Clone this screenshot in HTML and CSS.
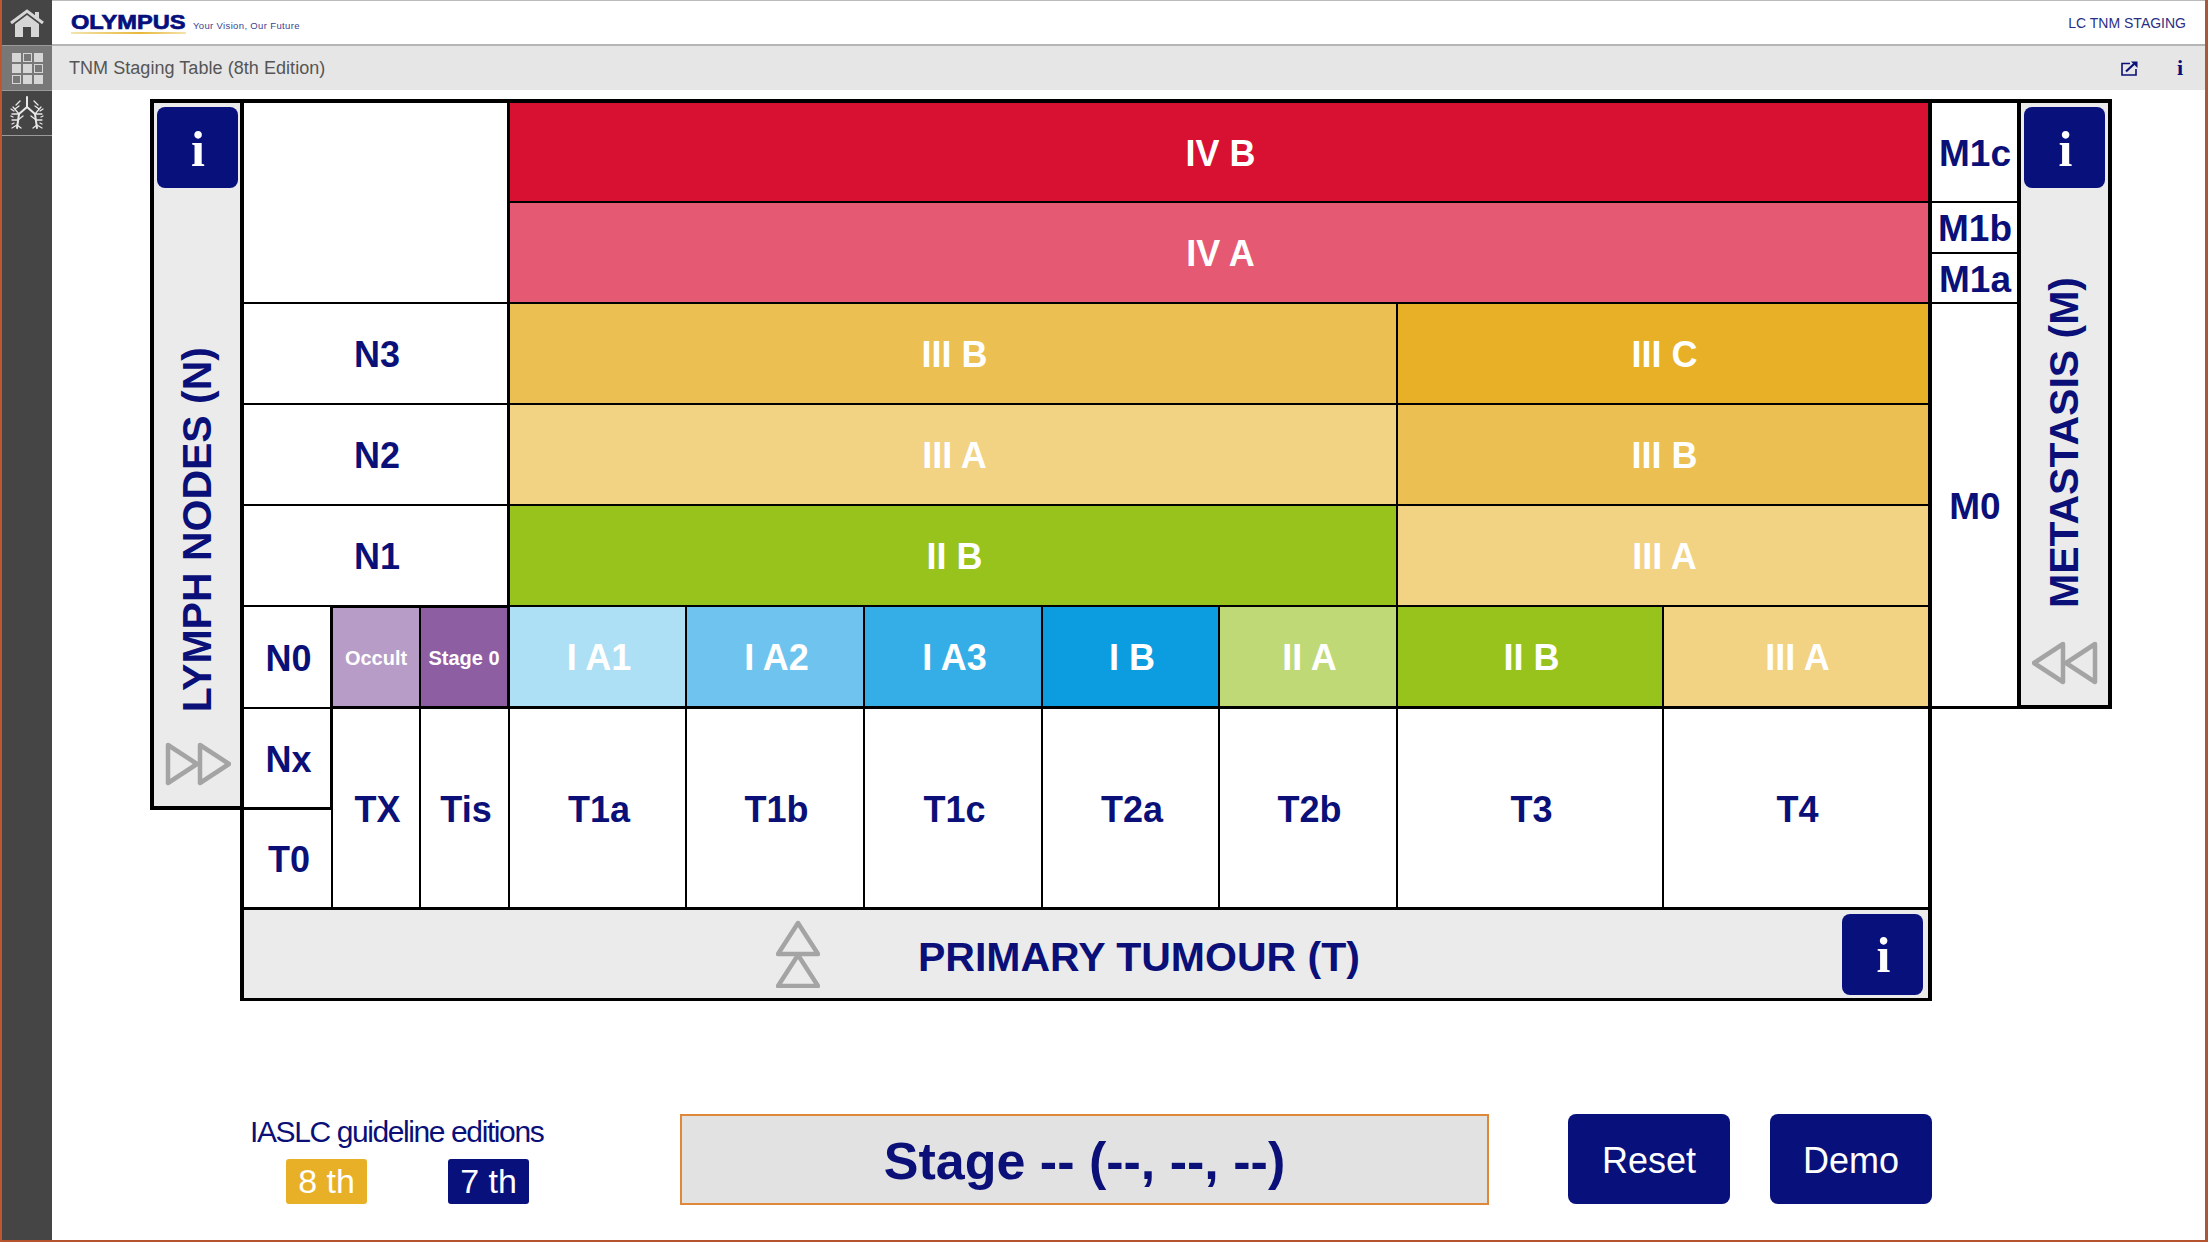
FILE: index.html
```html
<!DOCTYPE html>
<html lang="en">

    <head>
        <meta charset="UTF-8">
        <meta name="viewport" content="width=device-width, initial-scale=1.0">
        <title>TNM Staging Table</title>
        <link rel="stylesheet" href="styles.css">
    </head>

    <body>
        <div class="app">
            <nav class="side">
                <a class="side_item" href="#home">
                    <svg width="34" height="28" viewBox="0 0 34 28">
                        <path d="M1 14 L17 2 L33 14" fill="none" stroke="#d6d6d6" stroke-width="3"/>
                        <path d="M25 3 h4 v7 l-4 -3 z" fill="#d6d6d6"/>
                        <path d="M5 15 L17 6 L29 15 V28 H21 V18 H13 V28 H5 Z" fill="#d6d6d6"/>
                    </svg>
                </a>
                <a class="side_item side_item-active" href="#table">
                    <div class="tiles">
                        <span class="tile"></span><span class="tile tile-open"></span><span class="tile"></span>
                        <span class="tile"></span><span class="tile"></span><span class="tile tile-open"></span>
                        <span class="tile tile-open"></span><span class="tile"></span><span class="tile"></span>
                    </div>
                </a>
                <a class="side_item side_item-last" href="#lungs">
                    <svg width="34" height="34" viewBox="0 0 34 34" fill="none" stroke="#e8e8e8" stroke-linecap="round">
                        <path d="M17 1 V11 L9 18 L7 32 M17 11 L25 18 L27 32" stroke-width="2"/>
                        <path d="M9 18 L3 11 M9 18 L2 18 M8 24 L2 24 M8 24 L13 20 M7 29 L2 32 M7 29 L11 32 M6 9 L10 5 M5 13 L9 10 M4 15 L1 13 M3 21 L1 20 M4 27 L2 28 M25 18 L31 11 M25 18 L32 18 M26 24 L32 24 M26 24 L21 20 M27 29 L32 32 M27 29 L23 32 M28 9 L24 5 M29 13 L25 10 M30 15 L33 13 M31 21 L33 20 M30 27 L32 28" stroke-width="1.3"/>
                    </svg>
                </a>
            </nav>

            <main class="main">
                <header class="top">
                    <div class="brand">
                        <span class="brand_name">OLYMPUS</span>
                        <span class="brand_line"></span>
                    </div>
                    <span class="brand_tag">Your Vision, Our Future</span>
                    <span class="top_title">LC TNM STAGING</span>
                </header>

                <div class="bar">
                    <span class="bar_title">TNM Staging Table (8th Edition)</span>
                    <svg class="bar_edit" width="17" height="15" viewBox="0 0 17 15" fill="none" stroke="#0a1078">
                        <path d="M9 2.5 H1 V14 H15 V8" stroke-width="1.6"/>
                        <path d="M5 10.5 L13 3" stroke-width="2.2"/>
                        <path d="M10 0.5 H16.5 V7 Z" fill="#0a1078" stroke="none"/>
                    </svg>
                    <span class="bar_info">i</span>
                </div>

                <section class="staging">
                    <div class="panel panel-left">
                        <span class="info">i</span>
                        <span class="panel_label">LYMPH NODES (N)</span>
                        <svg class="panel_arrows" width="66" height="44" viewBox="0 0 66 44" fill="none" stroke="#a4a4a4" stroke-width="4.5" stroke-linejoin="round">
                            <path d="M3 3 L32 22 L3 41 Z"/>
                            <path d="M35 3 L64 22 L35 41 Z"/>
                        </svg>
                    </div>

                    <div class="cell cell-top cell-lead cell-edge a-blank"></div>
                    <div class="cell cell-top cell-edge stage ivb">IV B</div>
                    <div class="cell cell-edge stage iva">IV A</div>
                    <div class="cell cell-top cell-side a-m1c">M1c</div>
                    <div class="cell cell-side a-m1b">M1b</div>
                    <div class="cell cell-side a-m1a">M1a</div>

                    <div class="cell cell-lead cell-edge a-n3">N3</div>
                    <div class="cell stage iiib a-row3l">III B</div>
                    <div class="cell cell-edge stage iiic">III C</div>

                    <div class="cell cell-lead cell-edge a-n2">N2</div>
                    <div class="cell stage iiia a-row2l">III A</div>
                    <div class="cell cell-edge stage iiib a-row2r">III B</div>

                    <div class="cell cell-lead cell-edge a-n1">N1</div>
                    <div class="cell stage iib a-row1l">II B</div>
                    <div class="cell cell-edge stage iiia a-row1r">III A</div>

                    <div class="cell cell-side cell-thick a-m0">M0</div>

                    <div class="cell cell-lead cell-n0 a-n0">N0</div>
                    <div class="cell cell-thick cell-purple occult a-occ">Occult</div>
                    <div class="cell cell-thick cell-purple cell-wide stage0 a-st0">Stage 0</div>
                    <div class="cell cell-thick stage ia1 a-a1">I A1</div>
                    <div class="cell cell-thick stage ia2 a-a2">I A2</div>
                    <div class="cell cell-thick stage ia3 a-a3">I A3</div>
                    <div class="cell cell-thick stage ib a-b1">I B</div>
                    <div class="cell cell-thick stage iia a-iia">II A</div>
                    <div class="cell cell-thick stage iib a-iib">II B</div>
                    <div class="cell cell-thick cell-edge stage iiia a-iiia">III A</div>

                    <div class="cell cell-lead cell-thick cell-nx a-nx">Nx</div>
                    <div class="cell cell-lead cell-thick a-t0">T0</div>
                    <div class="cell cell-thick a-tx">TX</div>
                    <div class="cell cell-thick a-tis">Tis</div>
                    <div class="cell cell-thick a-t1a">T1a</div>
                    <div class="cell cell-thick a-t1b">T1b</div>
                    <div class="cell cell-thick a-t1c">T1c</div>
                    <div class="cell cell-thick a-t2a">T2a</div>
                    <div class="cell cell-thick a-t2b">T2b</div>
                    <div class="cell cell-thick a-t3">T3</div>
                    <div class="cell cell-thick cell-edge a-t4">T4</div>

                    <div class="panel panel-right">
                        <span class="info">i</span>
                        <span class="panel_label">METASTASIS (M)</span>
                        <svg class="panel_arrows" width="66" height="44" viewBox="0 0 66 44" fill="none" stroke="#a4a4a4" stroke-width="4.5" stroke-linejoin="round">
                            <path d="M31 3 L2 22 L31 41 Z"/>
                            <path d="M63 3 L34 22 L63 41 Z"/>
                        </svg>
                    </div>

                    <div class="tumour">
                        <svg class="tumour_arrows" width="44" height="68" viewBox="0 0 44 68" fill="none" stroke="#a4a4a4" stroke-width="4.5" stroke-linejoin="round">
                            <path d="M22 3 L42 34 H2 Z"/>
                            <path d="M22 35 L42 66 H2 Z"/>
                        </svg>
                        <span class="tumour_label">PRIMARY TUMOUR (T)</span>
                        <span class="info info-bar">i</span>
                    </div>
                </section>

                <section class="controls">
                    <div class="editions">
                        <p class="editions_title">IASLC guideline editions</p>
                        <div class="editions_list">
                            <span class="edition edition-on">8 th</span>
                            <span class="edition">7 th</span>
                        </div>
                    </div>
                    <div class="result">Stage -- (--, --, --)</div>
                    <a class="btn btn-reset" href="#reset">Reset</a>
                    <a class="btn" href="#demo">Demo</a>
                </section>
            </main>
        </div>
    </body>

</html>
```

FILE: styles.css
```css
* {
    box-sizing: border-box;
    margin: 0;
    padding: 0;
}

html,
body {
    height: 100%;
}

body {
    font-family: "Liberation Sans", Arial, sans-serif;
    background-color: #fff;
    color: #0a1078;
    overflow: hidden;
}

a {
    text-decoration: none;
    color: inherit;
}

.app {
    display: flex;
    height: 100vh;
    border-left: 2px solid #c0562e;
    border-right: 3px solid #a8583a;
    border-bottom: 2px solid #b5532f;
}

/* left rail */
.side {
    flex: 0 0 50px;
    background-color: #454545;
    display: flex;
    flex-direction: column;
}

.side_item {
    height: 46px;
    display: flex;
    align-items: center;
    justify-content: center;
    border-bottom: 1px solid #9a9a9a;
}

.side_item-active {
    height: 45px;
    background-color: #787878;
}

.side_item-last {
    height: 45px;
}

.tiles {
    display: grid;
    grid-template-columns: repeat(3, 9px);
    grid-auto-rows: 9px;
    gap: 2px;
}

.tile {
    background-color: #d6d6d6;
}

.tile-open {
    background-color: transparent;
    border: 1px solid #d6d6d6;
}

/* top bars */
.main {
    flex: 1;
    min-width: 0;
}

.top {
    height: 46px;
    display: flex;
    align-items: center;
    padding: 0 19px 0 19px;
    border-top: 1px solid #bbb;
    border-bottom: 2px solid #b5b5b5;
}

.brand {
    width: 122px;
    display: flex;
    flex-direction: column;
    gap: 2px;
    margin-top: 2px;
}

.brand_name {
    display: block;
    font-size: 20px;
    line-height: 16px;
    font-weight: 700;
    color: #06107c;
    -webkit-text-stroke: 0.7px #06107c;
    transform: scaleX(1.18);
    transform-origin: left center;
}

.brand_line {
    display: block;
    width: 115px;
    height: 2px;
    background: linear-gradient(90deg, #f3e3ad, #e8b83a 60%, #f3e3ad);
}

.brand_tag {
    font-size: 9.5px;
    letter-spacing: 0.35px;
    color: #3d4290;
    margin-top: 5px;
}

.top_title {
    margin-left: auto;
    font-size: 14px;
    color: #2a2f86;
}

.bar {
    height: 44px;
    display: flex;
    align-items: center;
    padding: 0 20px 0 17px;
    background-color: #e6e6e6;
}

.bar_title {
    font-size: 18px;
    letter-spacing: 0.05px;
    color: #555;
}

.bar_edit {
    margin-left: auto;
}

.bar_info {
    width: 10px;
    margin-left: 37px;
    font: 700 22px "Liberation Serif", serif;
    color: #0a1078;
    text-align: center;
}

/* staging table */
.staging {
    display: grid;
    width: 1962px;
    margin: 9px 0 0 98px;
    grid-template-columns: 90px 93px 88px 89px 177px 178px 178px 177px 178px 266px 268px 89px 91px;
    grid-template-rows: 104px 51px 50px 101px 101px 101px 102px 101px 100px 91px;
    grid-template-areas:
        "lp blank blank blank ivb ivb ivb ivb ivb ivb ivb m1c rp"
        "lp blank blank blank iva iva iva iva iva iva iva m1b rp"
        "lp blank blank blank iva iva iva iva iva iva iva m1a rp"
        "lp n3 n3 n3 r3l r3l r3l r3l r3l r3r r3r m0 rp"
        "lp n2 n2 n2 r2l r2l r2l r2l r2l r2r r2r m0 rp"
        "lp n1 n1 n1 r1l r1l r1l r1l r1l r1r r1r m0 rp"
        "lp n0 occ st0 a1 a2 a3 b1 iia iib iiia m0 rp"
        "lp nx tx tis t1a t1b t1c t2a t2b t3 t4 . ."
        ". t0 tx tis t1a t1b t1c t2a t2b t3 t4 . ."
        ". pt pt pt pt pt pt pt pt pt pt . .";
}

.cell {
    display: flex;
    align-items: center;
    justify-content: center;
    padding: 3px 0 0 3px;
    background-color: #fff;
    border-right: 2px solid #000;
    border-bottom: 2px solid #000;
    font-size: 36px;
    font-weight: 700;
    color: #0a1078;
    white-space: nowrap;
}

.cell-top {
    border-top: 4px solid #000;
}

.cell-lead {
    border-left: 4px solid #000;
}

.cell-edge {
    border-right-width: 4px;
}

.cell-lead.cell-edge {
    border-right-width: 3px;
}

.cell-side {
    padding-left: 1px;
    border-right-width: 4px;
    font-size: 37px;
}

.cell-thick {
    border-bottom-width: 3px;
}

.cell-n0 {
    border-right-width: 3px;
}

.cell-nx {
    border-right-width: 3px;
}

.cell-purple {
    padding: 2px 0 0;
    border-top: 1px solid #000;
    font-size: 20px;
}

.cell-wide {
    border-right-width: 3px;
}

.stage,
.occult,
.stage0 {
    color: #fff;
}

.ivb { grid-area: ivb; background-color: #d81031; }
.iva { grid-area: iva; background-color: #e55a72; }
.iiic { grid-area: r3r; background-color: #e8b026; }
.iiib { background-color: #ecbf52; }
.iiia { background-color: #f2d283; }
.iib { background-color: #98c31c; }
.iia { background-color: #c0d977; }
.ia1 { background-color: #ade0f5; }
.ia2 { background-color: #6ec4ee; }
.ia3 { background-color: #35ade6; }
.ib { background-color: #0b9de0; }
.occult { background-color: #b79cc8; }
.stage0 { background-color: #8e5ea3; }

.a-blank { grid-area: blank; }
.a-m1c { grid-area: m1c; }
.a-m1b { grid-area: m1b; }
.a-m1a { grid-area: m1a; }
.a-m0 { grid-area: m0; }
.a-n3 { grid-area: n3; }
.a-n2 { grid-area: n2; }
.a-n1 { grid-area: n1; }
.a-n0 { grid-area: n0; }
.a-nx { grid-area: nx; }
.a-t0 { grid-area: t0; }
.a-row3l { grid-area: r3l; }
.a-row2l { grid-area: r2l; }
.a-row2r { grid-area: r2r; }
.a-row1l { grid-area: r1l; }
.a-row1r { grid-area: r1r; }
.a-occ { grid-area: occ; }
.a-st0 { grid-area: st0; }
.a-a1 { grid-area: a1; }
.a-a2 { grid-area: a2; }
.a-a3 { grid-area: a3; }
.a-b1 { grid-area: b1; }
.a-iia { grid-area: iia; }
.a-iib { grid-area: iib; }
.a-iiia { grid-area: iiia; }
.a-tx { grid-area: tx; }
.a-tis { grid-area: tis; }
.a-t1a { grid-area: t1a; }
.a-t1b { grid-area: t1b; }
.a-t1c { grid-area: t1c; }
.a-t2a { grid-area: t2a; }
.a-t2b { grid-area: t2b; }
.a-t3 { grid-area: t3; }
.a-t4 { grid-area: t4; }

/* grey side panels */
.panel {
    display: flex;
    flex-direction: column;
    align-items: center;
    background-color: #ebebeb;
    border-top: 4px solid #000;
    border-bottom: 4px solid #000;
    padding-top: 4px;
}

.panel-left {
    grid-area: lp;
    border-left: 4px solid #000;
}

.panel-right {
    grid-area: rp;
    border-right: 4px solid #000;
}

.panel_label {
    writing-mode: vertical-rl;
    transform: rotate(180deg);
    font-size: 41px;
    font-weight: 700;
    line-height: 1;
    color: #0a1078;
    white-space: nowrap;
}

.panel-left .panel_label {
    margin-top: 159px;
}

.panel-left .panel_arrows {
    margin: 30px 0 0 2px;
}

.panel-right .panel_label {
    margin-top: 89px;
}

.panel-right .panel_arrows {
    margin-top: 33px;
}

.info {
    flex: none;
    width: 81px;
    height: 81px;
    padding: 2px 0 0 2px;
    display: flex;
    align-items: center;
    justify-content: center;
    background-color: #08107c;
    border-radius: 8px;
    font: 700 50px "Liberation Serif", serif;
    color: #fff;
}

.tumour {
    grid-area: pt;
    display: flex;
    align-items: center;
    background-color: #ebebeb;
    border-left: 4px solid #000;
    border-right: 4px solid #000;
    border-bottom: 3px solid #000;
    padding: 0 5px 0 532px;
}

.tumour_label {
    margin: 7px 0 0 98px;
    font-size: 41px;
    font-weight: 700;
    white-space: nowrap;
    color: #0a1078;
}

.info-bar {
    margin-left: auto;
}

/* bottom controls */
.controls {
    display: flex;
    align-items: flex-start;
    margin: 113px 0 0 198px;
}

.editions {
    width: 296px;
    color: #0a1078;
}

.editions_title {
    height: 45px;
    line-height: 36px;
    font-size: 30px;
    letter-spacing: -1.4px;
    white-space: nowrap;
}

.editions_list {
    display: flex;
    gap: 81px;
    margin-left: 36px;
}

.edition {
    width: 81px;
    height: 45px;
    display: flex;
    align-items: center;
    justify-content: center;
    background-color: #08107c;
    border-radius: 3px;
    font-size: 34px;
    color: #fff;
}

.edition-on {
    background-color: #e8b026;
}

.result {
    width: 809px;
    height: 91px;
    margin-left: 134px;
    padding-top: 3px;
    display: flex;
    align-items: center;
    justify-content: center;
    background-color: #e2e2e2;
    border: 2px solid #e0883a;
    font-size: 52px;
    font-weight: 700;
    color: #0a1078;
}

.btn {
    width: 162px;
    height: 90px;
    margin-left: 40px;
    padding-top: 3px;
    display: flex;
    align-items: center;
    justify-content: center;
    background-color: #08107c;
    border-radius: 8px;
    font-size: 36px;
    color: #fff;
}

.btn-reset {
    margin-left: 79px;
}
```
